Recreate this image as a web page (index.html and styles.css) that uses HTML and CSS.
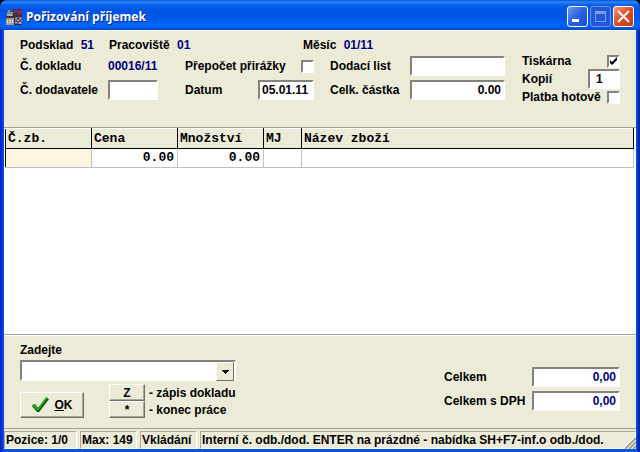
FILE: index.html
```html
<!DOCTYPE html>
<html lang="cs">
  <head>
    <meta charset="UTF-8" />
    <meta name="viewport" content="width=device-width, initial-scale=1.0" />
    <title>Pořizování příjemek</title>
    <link rel="stylesheet" href="styles.css">
  </head>
  <body>
    <div class="window">
      <!-- Title bar -->
      <header class="titlebar">
        <svg class="app-icon" width="16" height="16" viewBox="0 0 16 16" shape-rendering="crispEdges">
          <path fill="#8a8880" d="M2 1h2v2h3v4H1V3h1z" />
          <path fill="#3c3434" d="M7 0h9v8H7zM0 7h8v2H0z" />
          <path fill="#7c2868" d="M8 1h8v4h-2v1h-2V4H8z" />
          <path fill="#b4aca8" d="M1 5h5v2H1z" />
          <path fill="#a09c98" d="M0 9h8v7H0z" />
          <path fill="#e4e0dc" d="M1 11h1v3H1zM3 11h2v1H3zM3 13h2v1H3zM6 11h1v3H6z" />
          <path fill="#6c6484" d="M9 8h7v8H9z" />
          <path fill="#b8a8b0" d="M9 9h2v1H9zM13 9h2v1h-2zM11 11h2v1h-2zM9 13h2v1H9zM13 13h2v2h-2z" />
          <path fill="#302c38" d="M8 8h1v8H8zM9 15h7v1H9zM11 9h2v1h-2zM10 12h1v1h-1zM13 12h1v1h-1z" />
        </svg>
        <h1>Pořizování příjemek</h1>
        <div class="window-buttons">
          <button class="win-btn" type="button" aria-label="Minimalizovat">
            <svg width="19" height="19" viewBox="0 0 19 19"><path fill="#fff" d="M4 12h7v3H4z" /></svg>
          </button>
          <button class="win-btn win-btn-disabled" type="button" aria-label="Maximalizovat" disabled>
            <svg width="19" height="19" viewBox="0 0 19 19"><path fill="#7d9cec" fill-rule="evenodd" d="M4 4h11v11H4zM5 7v7h9V7z" /></svg>
          </button>
          <button class="win-btn win-btn-close" type="button" aria-label="Zavřít">
            <svg width="19" height="19" viewBox="0 0 19 19"><path fill="none" stroke="#fff" stroke-width="2" d="M4 4l11 11M15 4l-11 11" /></svg>
          </button>
        </div>
      </header>

      <!-- Document header -->
      <section class="doc-header">
        <div class="doc-fields">
          <div class="doc-info">
            <span>Podsklad <b class="value">51</b></span>
            <span>Pracoviště <b class="value">01</b></span>
            <span>Měsíc <b class="value">01/11</b></span>
          </div>

          <span>Č. dokladu</span>
          <span class="value">00016/11</span>
          <div class="check-row">
            <label for="prepocet">Přepočet přirážky</label>
            <input type="checkbox" id="prepocet" />
          </div>
          <label class="last-label" for="dodaciList">Dodací list</label>
          <input type="text" id="dodaciList" />

          <label for="dodavatel">Č. dodavatele</label>
          <input class="short" type="text" id="dodavatel" />
          <label for="datum">Datum</label>
          <input type="text" id="datum" value="05.01.11" />
          <label class="last-label" for="castka">Celk. částka</label>
          <input class="number" type="text" id="castka" value="0.00" />
        </div>

        <div class="print-fields">
          <div class="check-row">
            <label for="tiskarna">Tiskárna</label>
            <input type="checkbox" id="tiskarna" checked />
          </div>
          <div class="check-row">
            <label for="kopii">Kopií</label>
            <input class="copies" type="text" id="kopii" value="1" />
          </div>
          <div class="check-row">
            <label for="hotove">Platba hotově</label>
            <input type="checkbox" id="hotove" />
          </div>
        </div>
      </section>

      <!-- Items -->
      <main class="items">
        <table>
          <colgroup>
            <col class="col-code" />
            <col class="col-num" />
            <col class="col-num" />
            <col class="col-unit" />
            <col />
          </colgroup>
          <thead>
            <tr>
              <th>Č.zb.</th>
              <th>Cena</th>
              <th>Množství</th>
              <th>MJ</th>
              <th>Název zboží</th>
            </tr>
          </thead>
          <tbody>
            <tr>
              <td class="current"></td>
              <td>0.00</td>
              <td>0.00</td>
              <td></td>
              <td></td>
            </tr>
          </tbody>
        </table>
      </main>

      <!-- Commands and totals -->
      <section class="commands">
        <div class="command-box">
          <label for="zadejte">Zadejte</label>
          <div class="combo">
            <select id="zadejte">
              <option></option>
            </select>
          </div>
          <div class="actions">
            <button class="btn btn-ok" type="button">
              <svg width="18" height="16" viewBox="0 0 18 16">
                <path fill="#063c06" d="M1 9l3-2 3 4L15 1l3 1L8 15H6z" />
                <path fill="#1fa81f" d="M1 8l3-1 3 4L15 0l2 1L7 14H6z" />
              </svg>
              <span><u>O</u>K</span>
            </button>
            <div class="keys">
              <button class="btn" type="button">Z</button>
              <span>- zápis dokladu</span>
              <button class="btn" type="button">*</button>
              <span>- konec práce</span>
            </div>
          </div>
        </div>

        <div class="totals">
          <label for="celkem">Celkem</label>
          <input class="number value" type="text" id="celkem" value="0,00" />
          <label for="celkemDph">Celkem s DPH</label>
          <input class="number value" type="text" id="celkemDph" value="0,00" />
        </div>
      </section>

      <!-- Status bar -->
      <footer class="statusbar">
        <span class="status-pos">Pozice: 1/0</span>
        <span class="status-max">Max: 149</span>
        <span class="status-mode">Vkládání</span>
        <span class="status-hint">Interní č. odb./dod. ENTER na prázdné - nabídka SH+F7-inf.o odb./dod.</span>
        <svg class="grip" width="12" height="12" viewBox="0 0 12 12">
          <path stroke="#fff" d="M0 11L11 0M4 11l7-7M8 11l3-3" />
          <path stroke="#a5a294" stroke-width="2" d="M1 12L12 1M5 12l7-7M9 12l3-3" />
        </svg>
      </footer>
    </div>
  </body>
</html>
```

FILE: styles.css
```css
* {
  box-sizing: border-box;
}

body {
  margin: 0;
  background: #000;
  font-family: "Liberation Sans", Arial, sans-serif;
  font-size: 12px;
  font-weight: bold;
  line-height: 16px;
  color: #000;
}

input,
select,
button {
  margin: 0;
  font: inherit;
  color: inherit;
}

.window {
  display: flex;
  flex-direction: column;
  min-height: 100vh;
  padding: 0 4px 3px;
  background: linear-gradient(to right, #0019cf, #0855dd 4px, #0855dd calc(100% - 4px), #0019a0);
  border-radius: 7px 7px 0 0;
}

/* Title bar */
.titlebar {
  display: flex;
  align-items: center;
  gap: 4px;
  height: 30px;
  margin: 0 -4px;
  padding: 3px 6px 0;
  background: linear-gradient(to bottom, #0a50d0, #2a86f8 2px, #0860e8 5px, #0054e3 10px, #0058ea 18px, #0066fa 26px, #0048c8);
  border-radius: 7px 7px 0 0;
}

.titlebar h1 {
  flex: 1;
  margin: 0;
  font-family: "Open Sans", "Noto Sans", sans-serif;
  font-size: 12px;
  color: #fff;
  text-shadow: 1px 1px #0a2a80;
}

.window-buttons {
  display: flex;
  gap: 2px;
}

.win-btn {
  display: flex;
  width: 21px;
  height: 21px;
  padding: 0;
  border: 1px solid #fff;
  border-radius: 3px;
  background: linear-gradient(135deg, #6c96f4, #2860e0 50%, #1c50cc);
}

.win-btn-disabled {
  border-color: #6c94ec;
  background: #2058d8;
}

.win-btn-close {
  background: linear-gradient(135deg, #f09878, #e04c24 50%, #c03810);
}

/* Sunken fields */
input {
  min-width: 0;
  width: 100%;
  height: 20px;
  padding: 0 2px;
  border: 2px solid;
  border-color: #84827a #fff #fff #84827a;
  border-radius: 0;
  background: #fff;
}

input[type="checkbox"] {
  appearance: none;
  flex: none;
  width: 13px;
  height: 13px;
  padding: 0;
}

input[type="checkbox"]:checked {
  background: #fff url("data:image/svg+xml,%3Csvg xmlns='http://www.w3.org/2000/svg' viewBox='0 0 9 9'%3E%3Cpath d='M1 3v3l2 2 5-5V0L3 5z'/%3E%3C/svg%3E") center / 9px 9px no-repeat;
}

.value {
  color: #000080;
}

.number {
  text-align: right;
}

/* Document header */
.doc-header {
  display: flex;
  gap: 17px;
  padding: 6px 16px 21px;
  background: #ecebd8;
  border-top: 1px solid #fff;
  border-bottom: 1px solid #a5a294;
}

.doc-fields {
  flex: 1;
  display: grid;
  grid-template-columns: 88px 77px 73px 56px 96px 1fr;
  grid-template-rows: 15px 20px 20px;
  align-content: start;
  align-items: center;
  row-gap: 4px;
}

.doc-info {
  grid-column: 1 / -1;
  display: grid;
  grid-template-columns: 89px 194px 1fr;
  align-self: start;
}

.doc-info .value {
  margin-left: 4px;
}

.doc-fields .check-row {
  grid-column: span 2;
}

.check-row {
  display: flex;
  justify-content: space-between;
  align-items: center;
}

.last-label {
  padding-left: 16px;
}

.short {
  width: 50px;
}

.print-fields {
  width: 98px;
  padding-top: 15px;
}

.print-fields .check-row {
  height: 18px;
}

.copies {
  width: 32px;
  padding: 0 6px;
}

/* Items */
.items {
  flex: 1;
  padding: 0 2px 0 1px;
  background: #fff;
}

table {
  width: 100%;
  table-layout: fixed;
  border-collapse: collapse;
  font-family: "Liberation Mono", "Courier New", monospace;
  font-size: 13px;
}

.col-code,
.col-num {
  width: 86px;
}

.col-unit {
  width: 38px;
}

th {
  height: 20px;
  padding: 0 2px;
  border: 1px solid #000;
  border-top-color: #fff;
  background: #ecebd8;
  text-align: left;
}

td {
  height: 19px;
  padding: 0 3px;
  border: 1px solid #c0c0c0;
  text-align: right;
}

td.current {
  border-left-color: #000;
  background: #fff5e1;
}

/* Commands and totals */
.commands {
  display: flex;
  justify-content: space-between;
  padding: 7px 16px 10px;
  background: #ecebd8;
  border-top: 1px solid #a5a294;
  box-shadow: inset 0 1px #fff;
}

.combo {
  position: relative;
  width: 216px;
  margin: 2px 0 3px;
}

.combo select {
  display: block;
  appearance: none;
  width: 100%;
  height: 21px;
  border: 2px solid;
  border-color: #84827a #fff #fff #84827a;
  border-radius: 0;
  background: #fff;
}

.combo::after {
  content: "";
  position: absolute;
  top: 2px;
  right: 2px;
  width: 16px;
  height: 17px;
  border: 1px solid;
  border-color: #fff #716f64 #716f64 #fff;
  background: #ecebd8 url("data:image/svg+xml,%3Csvg xmlns='http://www.w3.org/2000/svg' viewBox='0 0 7 4'%3E%3Cpath d='M0 0h7v1H6v1H5v1H4v1H3V3H2V2H1V1H0z'/%3E%3C/svg%3E") center / 7px 4px no-repeat;
  pointer-events: none;
}

.actions {
  display: flex;
  align-items: flex-end;
  gap: 25px;
}

.btn {
  padding: 0;
  border: 1px solid;
  border-color: #fff #716f64 #716f64 #fff;
  box-shadow: inset -1px -1px #aca899;
  background: #ecebd8;
}

.btn-ok {
  display: flex;
  justify-content: center;
  align-items: center;
  gap: 5px;
  width: 64px;
  height: 26px;
}

.keys {
  display: grid;
  grid-template-columns: 36px auto;
  grid-auto-rows: 17px;
  align-items: center;
  column-gap: 4px;
}

.keys .btn {
  height: 17px;
  line-height: 14px;
}

.totals {
  display: grid;
  grid-template-columns: 88px 88px;
  grid-auto-rows: 20px;
  align-content: start;
  align-items: center;
  row-gap: 4px;
  padding-top: 25px;
}

/* Status bar */
.statusbar {
  display: flex;
  gap: 3px;
  height: 21px;
  padding-top: 2px;
  background: #ecebd8;
  border-top: 1px solid #a5a294;
  white-space: nowrap;
}

.statusbar span {
  padding: 0 1px;
  border: 1px solid;
  border-color: #aca899 #fff #fff #aca899;
}

.status-pos {
  width: 73px;
}

.status-max,
.status-mode {
  width: 57px;
}

.status-hint {
  flex: 1;
}

.grip {
  align-self: flex-end;
  margin-left: -15px;
}
```
